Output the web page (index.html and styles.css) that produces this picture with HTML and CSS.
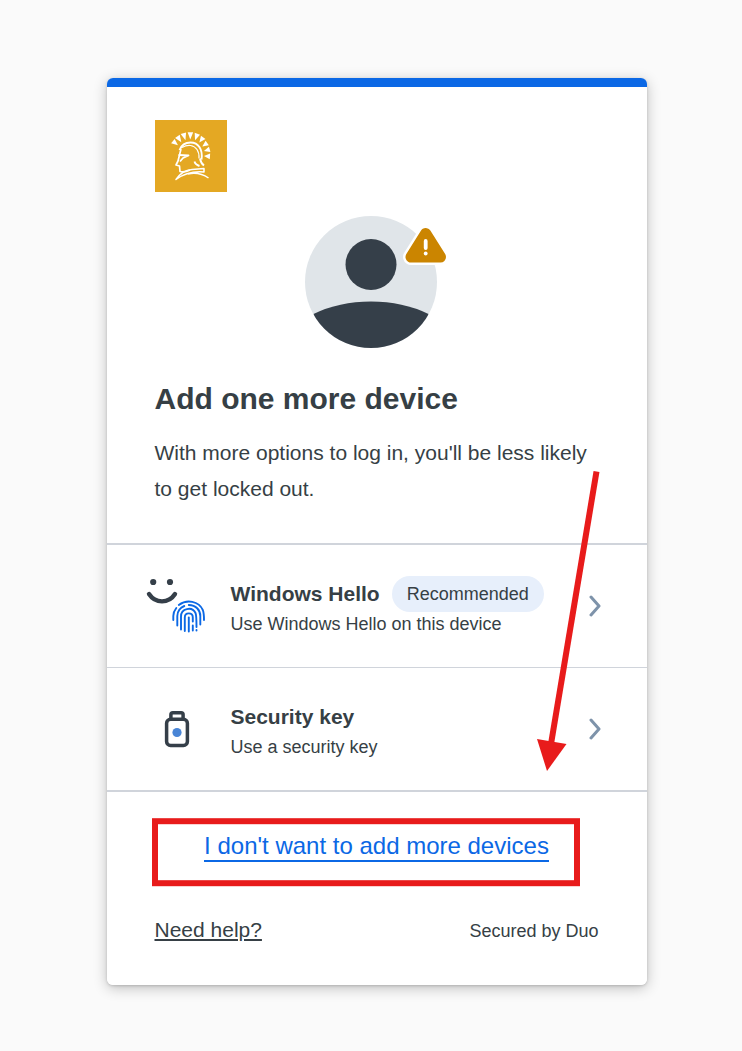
FILE: index.html
```html
<!DOCTYPE html>
<html lang="en">
<head>
<meta charset="utf-8">
<title>Add one more device</title>
<link rel="stylesheet" href="styles.css">
</head>
<body>
<main class="card">
  <section class="intro">
    <svg class="logo" viewBox="0 0 72 72" aria-hidden="true">
      <rect width="72" height="72" fill="#e4a823"/>
      <g fill="#fff">
        <path id="plume" transform="rotate(-51 35 35)" d="M32.200 13h5.600L35 19.500z"/>
        <path transform="rotate(-34 35 35)" d="M32.200 12.500h5.600L35 19.500z"/>
        <path transform="rotate(-17 35 35)" d="M32.200 12.300h5.600L35 19.500z"/>
        <path transform="rotate(1 35 35)" d="M32.200 12.300h5.600L35 19.500z"/>
        <path transform="rotate(19 35 35)" d="M32.200 12.500h5.600L35 19.500z"/>
        <path transform="rotate(37 35 35)" d="M32.200 13h5.600L35 19.500z"/>
        <path transform="rotate(55 35 35)" d="M32.200 14h5.600L35 20z"/>
        <path transform="rotate(74 35 35)" d="M32.200 14.500h5.600L35 20.500z"/>
        <path transform="rotate(94 35 35)" d="M32.200 15h5.600L35 21z"/>
      </g>
      <g fill="none" stroke="#fff" stroke-linejoin="round">
        <path d="M24.500 30c2-5 6-7.500 11-7.500 8 0 12.500 7 11 17" stroke-width="1.900"/>
        <path d="M27 27.500c6-3.500 12-2.500 15 2 2 3 2.300 5 2 9" stroke-width="1.200"/>
        <path d="M26 29L23 41l-2 4 3.500 1 .5 5.500c4 1 7 0 10-1.500" stroke-width="1.700"/>
        <path d="M23.500 35l10 .5-5.500 2.500-3 3.500" stroke-width="1.800"/>
        <path d="M39.500 41.500c.5 2 2 3.500 5 4.500M45 38.500c.5 3 2 5.500 4 7" stroke-width="1.900"/>
        <path d="M21 59.500c4-6 9-9.500 16-10l12-1v3.500c-12-1-20 1.500-28 7.500zM33 54c7-1.500 14-.5 20.500 4" stroke-width="1.500"/>
      </g>
    </svg>
    <div class="avatar">
      <svg class="avatar-art" viewBox="0 0 132 132" aria-hidden="true">
        <clipPath id="disc"><circle cx="66" cy="66" r="66"/></clipPath>
        <circle cx="66" cy="66" r="66" fill="#e0e5e9"/>
        <circle cx="66" cy="48.500" r="25.500" fill="#353f49"/>
        <path clip-path="url(#disc)" d="M8.500 98Q34 85.500 66 85.500T123.500 98V132H8.500Z" fill="#353f49"/>
      </svg>
      <svg class="warning" viewBox="0 0 48 44" aria-hidden="true">
        <path d="M23.700 10.500L9 34H38.500Z" fill="#fff" stroke="#fff" stroke-width="16" stroke-linejoin="round"/>
        <path d="M23.700 10.500L9 34H38.500Z" fill="#cb8500" stroke="#cb8500" stroke-width="11" stroke-linejoin="round"/>
        <path d="M23.700 18v7" stroke="#fff" stroke-width="3.800" stroke-linecap="round"/>
        <circle cx="23.700" cy="30.500" r="1.900" fill="#fff"/>
      </svg>
    </div>
    <h1 class="title">Add one more device</h1>
    <p class="lead">With more options to log in, you'll be less likely to get locked out.</p>
  </section>

  <div class="option">
    <svg class="option-icon" viewBox="0 0 66 70" fill="none" stroke-linecap="round" aria-hidden="true">
      <circle cx="13.200" cy="12" r="3.100" fill="#353f49"/>
      <circle cx="30" cy="12" r="3.100" fill="#353f49"/>
      <path d="M9 24C15.500 33.800 28.500 33.800 35 24" stroke="#353f49" stroke-width="4.400"/>
      <g transform="translate(2.800 -.5)" stroke="#0b68e5" stroke-width="1.900">
        <path d="M30.500 50.500v-4c0-3 1-5.500 3-8M36 35.500c8-6 20-4 24 5 1.200 3 1.200 6 1.200 10"/>
        <path d="M34.500 56v-9.500c0-4.500 3-8.500 7-10M46 35.500c7 0 11.500 5 11.500 11V55"/>
        <path d="M38.200 60V47c0-8 11-10.500 14.500-3.500 1 2 1 4 1 14M53.700 60.500v.5"/>
        <path d="M42 61.500V48c0-5.500 8-5.500 8 0v4M50 56v5"/>
        <path d="M46 48v14"/>
      </g>
    </svg>
    <div class="option-text">
      <div class="option-head"><h2 class="option-title">Windows Hello</h2><span class="badge">Recommended</span></div>
      <p class="option-note">Use Windows Hello on this device</p>
    </div>
    <svg class="chevron" viewBox="0 0 12 22" aria-hidden="true"><path d="M2 2l8 9-8 9"/></svg>
  </div>

  <div class="option option-last">
    <svg class="option-icon" viewBox="0 0 66 70" fill="none" stroke="#353f49" stroke-width="3.500" aria-hidden="true">
      <rect x="26.600" y="24.200" width="20.800" height="26.200" rx="4"/>
      <path d="M30.900 24v-4.300c0-1.300.8-2 2-2h8.200c1.200 0 2 .7 2 2V24"/>
      <circle cx="37" cy="37.500" r="4.600" fill="#4985d6" stroke="none"/>
    </svg>
    <div class="option-text">
      <div class="option-head"><h2 class="option-title">Security key</h2></div>
      <p class="option-note">Use a security key</p>
    </div>
    <svg class="chevron" viewBox="0 0 12 22" aria-hidden="true"><path d="M2 2l8 9-8 9"/></svg>
  </div>

  <section class="bottom">
    <a class="skip">I don't want to add more devices</a>
    <footer class="footer"><a class="help">Need help?</a><span class="secured">Secured by Duo</span></footer>
  </section>
</main>
<svg class="annotation" viewBox="0 0 742 1051" aria-hidden="true">
  <rect x="155" y="821.200" width="422" height="62" fill="none" stroke="#e81b1b" stroke-width="6"/>
  <path d="M596.500 471.500L551 744" stroke="#e81b1b" stroke-width="6"/>
  <path d="M537 739l29.500 5L547 771z" fill="#e81b1b"/>
</svg>
</body>
</html>
```
FILE: styles.css
```css
* { box-sizing: border-box; }
body {
  margin: 0;
  height: 1051px;
  padding: 78px 95px 0 107px;
  background: #fafafa;
  color: #363f45;
  font-family: "Liberation Sans", Arial, sans-serif;
  overflow: hidden;
}
h1, h2, p { margin: 0; }
.card {
  display: flex;
  flex-direction: column;
  height: 907px;
  overflow: hidden;
  border-radius: 6px;
  background: linear-gradient(#0b68e5 9px, #fff 9px);
  box-shadow: 0 3px 14px rgba(0, 0, 0, .24), 0 1px 3px rgba(0, 0, 0, .16);
}
.intro {
  height: 467px;
  padding: 42px 48px 0 47.5px;
  border-bottom: 2px solid #d0d4db;
}
.logo { display: block; width: 72px; height: 72px; margin-left: .5px; }
.avatar { position: relative; width: 132px; height: 132px; margin: 24px 0 0 150.5px; }
.avatar-art { display: block; width: 132px; height: 132px; }
.warning { position: absolute; left: 97px; top: 7px; width: 48px; height: 44px; overflow: visible; }
.title { margin-top: 33px; font-size: 30px; line-height: 36px; }
.lead { margin-top: 18px; font-size: 21px; line-height: 36px; }
.option {
  display: flex;
  height: 123px;
  border-bottom: 1px solid #d0d4db;
}
.option-last { height: 124px; border-bottom-width: 2px; }
.option-icon { flex: none; width: 66px; height: 70px; margin: 25px 0 0 33px; }
.option-last .option-icon { margin-top: 27px; }
.option-text { flex: 1; padding: 31px 0 0 24.5px; }
.option-head { display: flex; gap: 12px; height: 36px; white-space: nowrap; }
.option-title { font-size: 21px; line-height: 36px; }
.badge { height: 36px; padding: 0 15px; border-radius: 18px; background: #e7effb; font-size: 18px; line-height: 36px; }
.option-note { font-size: 18px; line-height: 24px; }
.chevron { flex: none; width: 12px; height: 22px; margin: 50px 46px 0 0; }
.chevron path { fill: none; stroke: #7e93aa; stroke-width: 3; stroke-linecap: round; stroke-linejoin: round; }
.bottom { display: flex; flex-direction: column; align-items: center; padding-top: 40px; }
.skip { height: 30px; margin-right: 1px; border-bottom: 2px solid #0b68e5; color: #0b68e5; font-size: 24px; line-height: 28px; }
.footer { display: flex; justify-content: space-between; align-items: baseline; width: 100%; margin-top: 56px; padding: 0 48.5px 0 47.5px; line-height: 24px; }
.help { font-size: 21px; text-decoration: underline; text-decoration-thickness: 2px; text-underline-offset: 2px; }
.secured { font-size: 18px; }
.annotation { position: absolute; left: 0; top: 0; width: 742px; height: 1051px; pointer-events: none; }
```
